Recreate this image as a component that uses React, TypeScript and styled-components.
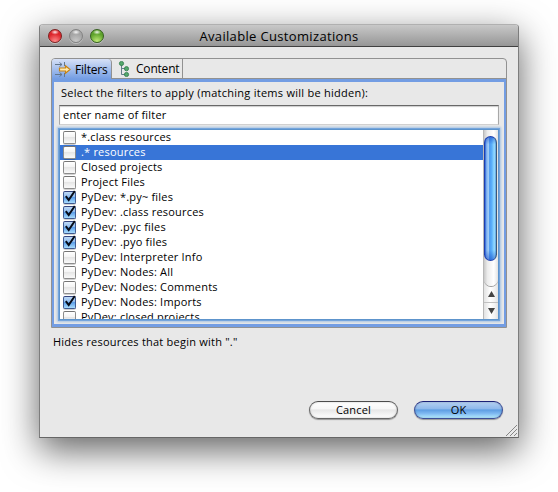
import React, { useState } from "react";
import styled, { createGlobalStyle, css } from "styled-components";

const Global = createGlobalStyle`
  * { box-sizing: border-box; }
  body { margin: 0; background: #fff; overflow: hidden; }
`;

const Desktop = styled.main`
  width: 558px;
  height: 492px;
  padding: 24px 39px;
  overflow: hidden;
  font: 11px/15px "Lucida Grande", "Open Sans", "Noto Sans", sans-serif;
  color: #000;
`;

const Window = styled.section`
  display: flex;
  flex-direction: column;
  width: 480px;
  height: 414px;
  border: 1px solid #7d7d7d;
  border-top-color: #b0b0b0;
  border-bottom-color: #666;
  border-radius: 4px 4px 0 0;
  background: #e8e8e8;
  box-shadow: 0 12px 36px rgba(0, 0, 0, 0.62);
`;

const TitleBar = styled.header`
  display: grid;
  grid-template-columns: 80px 1fr 80px;
  align-items: center;
  flex: none;
  height: 22px;
  border-bottom: 1px solid #404040;
  border-radius: 3px 3px 0 0;
  background: linear-gradient(#c8c8c8, #969696);
`;

const Lights = styled.div`
  display: flex;
  gap: 7px;
  padding-left: 8px;
`;

const Light = styled.span<{ $edge: string; $mid: string; $glow: string }>`
  width: 14px;
  height: 14px;
  border: 1px solid ${(p) => p.$edge};
  border-radius: 50%;
  background: radial-gradient(ellipse 4px 2.5px at 50% 18%, rgba(255, 255, 255, 0.9), transparent),
    radial-gradient(circle at 50% 95%, ${(p) => p.$glow}, ${(p) => p.$mid} 60%);
  box-shadow: 0 1px 0 rgba(255, 255, 255, 0.35);
`;

const Title = styled.h1`
  margin: 0;
  text-align: center;
  font-size: 13px;
  font-weight: 400;
  line-height: 20px;
  letter-spacing: 0.34px;
  white-space: nowrap;
`;

const Body = styled.div`
  display: flex;
  flex-direction: column;
  padding: 11px 11px 0;
`;

const Folder = styled.div`
  height: 270px;
  border: 1px solid #919191;
  border-radius: 4px 4px 0 0;
  overflow: hidden;
`;

const TabStrip = styled.div`
  display: flex;
  height: 20px;
  border-bottom: 1px solid #919191;
`;

const Tab = styled.div<{ $active?: boolean }>`
  display: flex;
  align-items: center;
  width: ${(p) => (p.$active ? 60 : 71)}px;
  height: ${(p) => (p.$active ? 20 : 19)}px;
  padding-left: ${(p) => (p.$active ? 3 : 5)}px;
  gap: ${(p) => (p.$active ? 4 : 3)}px;
  border-right: 1px solid #919191;
  font-size: 12px;
  white-space: nowrap;
  letter-spacing: -0.2px;
  ${(p) =>
    p.$active &&
    css`
      border-radius: 0 4px 0 0;
      background: linear-gradient(#d7e1f7, #739de3);
    `}
`;

const Panel = styled.div`
  display: flex;
  flex-direction: column;
  height: 248px;
  padding: 3px 3px 0 2px;
  border: 3px solid #739de3;
  border-left-width: 2px;
  border-right-width: 2px;
`;

const Label = styled.label`
  height: 20px;
  padding-left: 5px;
  letter-spacing: 0.26px;
  white-space: nowrap;
`;

const Field = styled.input`
  width: 440px;
  height: 20px;
  margin: 0 0 0 3px;
  padding: 0 4px 2px 3px;
  border: 1px solid #a8a8a8;
  border-top: 1px solid #686868;
  border-bottom-color: #d0d0d0;
  outline: none;
  border-radius: 0;
  background: #fff;
  box-shadow: inset 0 1px 1px #ccc;
  font: inherit;
  letter-spacing: 0.2px;
  color: #000;
`;

const ListBox = styled.div`
  display: flex;
  flex: none;
  width: 438px;
  height: 189px;
  margin: 5px 0 0 4px;
  background: #fff;
  box-shadow: 0 0 0 1px #5d94cc, 0 0 0 2px #75a5dc, 0 0 2px 3px #a6c3e4;
`;

const Rows = styled.ul`
  flex: 1;
  margin: 0;
  padding: 0;
  overflow: hidden;
  list-style: none;
`;

const Row = styled.li<{ $selected: boolean }>`
  display: flex;
  align-items: center;
  height: 15px;
  padding-left: 3px;
  gap: 5px;
  background: ${(p) => (p.$selected ? "#3875d7" : "#fff")};
  color: ${(p) => (p.$selected ? "#fff" : "#000")};
  white-space: nowrap;
`;

const RowText = styled.span`
  margin-bottom: 2px;
  letter-spacing: 0.2px;
`;

const Check = styled.span<{ $on: boolean }>`
  display: block;
  width: 13px;
  height: 13px;
  border: 1px solid ${(p) => (p.$on ? "#3f5a91" : "#8c8c8c")};
  border-top-color: ${(p) => (p.$on ? "#34447e" : "#747474")};
  border-radius: 2px;
  background: ${(p) =>
    p.$on
      ? "linear-gradient(#bfdaf6 0%, #8fbcf0 45%, #5da0ea 50%, #a9dcfd 100%)"
      : "linear-gradient(#fff 0%, #f4f4f4 45%, #e6e6e6 50%, #fafafa 100%)"};
  box-shadow: 0 1px 0 rgba(0, 0, 0, 0.18);

  svg {
    display: block;
    margin-top: -2px;
    overflow: visible;
  }
`;

const ScrollBar = styled.div`
  display: flex;
  flex-direction: column;
  width: 15px;
  border-left: 1px solid #b8b8b8;
  background: linear-gradient(90deg, #e2e2e2, #fff 45%, #f3f3f3 75%, #e2e2e2);
`;

const Track = styled.div`
  flex: none;
  height: 156px;
  padding: 6px 1px 0 0;
  border-radius: 0 0 8px 8px;
  background: linear-gradient(90deg, #c9c9c9, #ececec 25%, #fff 70%, #e2e2e2);
  box-shadow: 0 1px 0 #999;
`;

const Thumb = styled.div`
  width: 13px;
  height: 125px;
  border: 1px solid #1d3fae;
  border-right-color: #3d5876;
  border-radius: 7px;
  background: linear-gradient(transparent 92%, rgba(12, 60, 190, 0.5)),
    linear-gradient(rgba(12, 60, 190, 0.5), transparent 6%),
    linear-gradient(90deg, #2a5fd2 0%, #86b9f2 16%, #9fcbf6 32%, #4b9bf1 42%, #5bb0fa 62%, #95dcff 85%, #5a9bdc 100%);
`;

const Arrow = styled.div<{ $down?: boolean }>`
  display: flex;
  align-items: center;
  justify-content: center;
  flex: none;
  height: ${(p) => (p.$down ? 17 : 16)}px;
  border-top: ${(p) => (p.$down ? "1px solid #c0c0c0" : "none")};
`;

const Description = styled.p`
  height: 15px;
  margin: 6px 0 0 2px;
  letter-spacing: 0.23px;
  white-space: nowrap;
`;

const Actions = styled.footer`
  display: flex;
  gap: 16px;
  margin: 52px 4px 0 auto;
`;

const Button = styled.button<{ $primary?: boolean }>`
  width: 89px;
  height: 18px;
  padding: 0;
  border: 1px solid ${(p) => (p.$primary ? "#3c4e96" : "#666")};
  border-top-color: ${(p) => (p.$primary ? "#1c2277" : "#4d4d4d")};
  border-radius: 9px;
  background: ${(p) =>
    p.$primary
      ? "linear-gradient(#b5d0f1 0%, #8fb9eb 42%, #5d9de2 50%, #7fb9f1 72%, #b4ecff 100%)"
      : "linear-gradient(#fff 0%, #f7f7f7 42%, #e7e7e7 50%, #f3f3f3 75%, #fff 100%)"};
  box-shadow: 0 1px 1px rgba(0, 0, 0, 0.35), inset 0 0 2px rgba(0, 0, 0, 0.25);
  font: inherit;
  line-height: 14px;
  letter-spacing: 0.2px;
  color: #000;
`;

const GripSlot = styled.div`
  display: flex;
  justify-content: flex-end;
  margin: auto 0 1px;
  padding-right: 1px;
`;

const FilterIcon = () => (
  <svg width="16" height="16" viewBox="0 0 16 16" fill="none">
    <path d="M0 3.5h7M0 13.5h7M4.5 1.5l2.5 2-2.5 2M4.5 11.5l2.5 2-2.5 2M9.5 1v4M9.5 12v4" stroke="#63768c" />
    <path d="M4.5 7h6V4.8L15 8.5l-4.5 3.7V10h-6z" fill="#ffe9ac" stroke="#c98413" strokeWidth="1.2" />
  </svg>
);

const TreeIcon = () => (
  <svg width="16" height="16" viewBox="0 0 16 16">
    <path d="M4.5 4v9.5H10M4.5 7.5H10" fill="none" stroke="#647e8a" />
    <g fill="#55a86c" stroke="#2c7a48" strokeWidth=".8">
      <circle cx="4.5" cy="2.5" r="2.1" />
      <circle cx="9.5" cy="7.7" r="2.1" />
      <circle cx="9.5" cy="13.5" r="2.1" />
    </g>
  </svg>
);

const Tick = () => (
  <svg width="13" height="13" viewBox="0 0 13 13" fill="none">
    <path d="M1.8 6.2 4.7 10 10.8 1" stroke="#080d18" strokeWidth="2" />
  </svg>
);

const filters: { name: string; on?: boolean }[] = [
  { name: "*.class resources" },
  { name: ".* resources" },
  { name: "Closed projects" },
  { name: "Project Files" },
  { name: "PyDev: *.py~ files", on: true },
  { name: "PyDev: .class resources", on: true },
  { name: "PyDev: .pyc files", on: true },
  { name: "PyDev: .pyo files", on: true },
  { name: "PyDev: Interpreter Info" },
  { name: "PyDev: Nodes: All" },
  { name: "PyDev: Nodes: Comments" },
  { name: "PyDev: Nodes: Imports", on: true },
  { name: "PyDev: closed projects" },
];

export default function App() {
  const [selected, setSelected] = useState(1);
  const [query, setQuery] = useState("enter name of filter");
  return (
    <Desktop>
      <Global />
      <Window>
        <TitleBar>
          <Lights>
            <Light $edge="#7c2020" $mid="#dd262c" $glow="#ff8d8d" />
            <Light $edge="#828282" $mid="#a5a5a5" $glow="#c9c9c9" />
            <Light $edge="#35601e" $mid="#5fa32c" $glow="#c4ee7b" />
          </Lights>
          <Title>Available Customizations</Title>
        </TitleBar>
        <Body>
          <Folder>
            <TabStrip>
              <Tab $active><FilterIcon />Filters</Tab>
              <Tab><TreeIcon />Content</Tab>
            </TabStrip>
            <Panel>
              <Label htmlFor="filter">Select the filters to apply (matching items will be hidden):</Label>
              <Field id="filter" value={query} onChange={(e) => setQuery(e.target.value)} />
              <ListBox>
                <Rows>
                  {filters.map((f, i) => (
                    <Row key={f.name} $selected={i === selected} onClick={() => setSelected(i)}>
                      <Check $on={!!f.on}>{f.on && <Tick />}</Check>
                      <RowText>{f.name}</RowText>
                    </Row>
                  ))}
                </Rows>
                <ScrollBar>
                  <Track><Thumb /></Track>
                  <Arrow>
                    <svg width="7" height="6"><path d="M0 6 3.5 0 7 6z" fill="#444" /></svg>
                  </Arrow>
                  <Arrow $down>
                    <svg width="7" height="6"><path d="M0 0h7L3.5 6z" fill="#444" /></svg>
                  </Arrow>
                </ScrollBar>
              </ListBox>
            </Panel>
          </Folder>
          <Description>Hides resources that begin with "."</Description>
          <Actions>
            <Button>Cancel</Button>
            <Button $primary>OK</Button>
          </Actions>
        </Body>
        <GripSlot>
          <svg width="11" height="11" viewBox="0 0 11 11" stroke="#858585">
            <path d="M0 11 11 0M4 11l7-7M8 11l3-3" />
          </svg>
        </GripSlot>
      </Window>
    </Desktop>
  );
}
